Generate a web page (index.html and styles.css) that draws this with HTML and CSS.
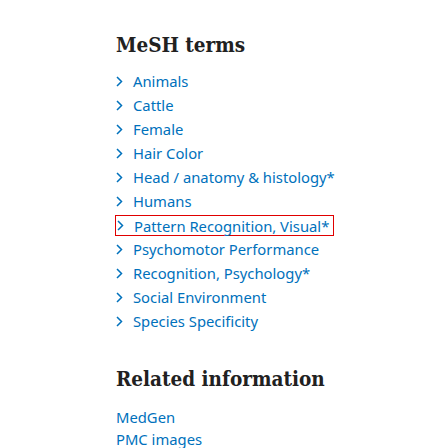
FILE: index.html
```html
<!DOCTYPE html>
<html>
<head>
<meta charset="utf-8">
<link rel="stylesheet" href="styles.css">
</head>
<body>
<div class="page">
  <section class="mesh">
    <h2 class="title">MeSH terms</h2>
    <ul class="terms">
      <li class="term"><svg class="chev" viewBox="0 0 7 11"><path d="M1 1 L5.5 5.5 L1 10"/></svg><a>Animals</a></li>
      <li class="term"><svg class="chev" viewBox="0 0 7 11"><path d="M1 1 L5.5 5.5 L1 10"/></svg><a>Cattle</a></li>
      <li class="term"><svg class="chev" viewBox="0 0 7 11"><path d="M1 1 L5.5 5.5 L1 10"/></svg><a>Female</a></li>
      <li class="term"><svg class="chev" viewBox="0 0 7 11"><path d="M1 1 L5.5 5.5 L1 10"/></svg><a>Hair Color</a></li>
      <li class="term"><svg class="chev" viewBox="0 0 7 11"><path d="M1 1 L5.5 5.5 L1 10"/></svg><a>Head / anatomy &amp; histology*</a></li>
      <li class="term"><svg class="chev" viewBox="0 0 7 11"><path d="M1 1 L5.5 5.5 L1 10"/></svg><a>Humans</a></li>
      <li class="term active"><svg class="chev" viewBox="0 0 7 11"><path d="M1 1 L5.5 5.5 L1 10"/></svg><a>Pattern Recognition, Visual*</a></li>
      <li class="term"><svg class="chev" viewBox="0 0 7 11"><path d="M1 1 L5.5 5.5 L1 10"/></svg><a>Psychomotor Performance</a></li>
      <li class="term"><svg class="chev" viewBox="0 0 7 11"><path d="M1 1 L5.5 5.5 L1 10"/></svg><a>Recognition, Psychology*</a></li>
      <li class="term"><svg class="chev" viewBox="0 0 7 11"><path d="M1 1 L5.5 5.5 L1 10"/></svg><a>Social Environment</a></li>
      <li class="term"><svg class="chev" viewBox="0 0 7 11"><path d="M1 1 L5.5 5.5 L1 10"/></svg><a>Species Specificity</a></li>
    </ul>
  </section>
  <section class="related">
    <h2 class="title">Related information</h2>
    <ul class="links">
      <li><a>MedGen</a></li>
      <li><a>PMC images</a></li>
    </ul>
  </section>
</div>
</body>
</html>
```
FILE: styles.css
```css
html, body {
  margin: 0;
  padding: 0;
  background: #fff;
}
.page {
  padding: 31px 0 0 116px;
  font-family: "Noto Sans", "Open Sans", sans-serif;
  font-weight: 400;
  font-size: 14.8px;
  color: #0071bc;
}
.title {
  margin: 0;
  font-family: "DejaVu Serif Condensed", "DejaVu Serif", serif;
  font-weight: bold;
  font-size: 20.5px;
  color: #212121;
  line-height: 28px;
}
.terms {
  list-style: none;
  margin: 10px 0 0 0;
  padding: 0;
}
.term {
  display: flex;
  align-items: center;
  height: 24px;
  line-height: 24px;
}
.chev {
  width: 7px;
  height: 11px;
  margin: 0 10px 0 0;
  fill: none;
  stroke: #0071bc;
  stroke-width: 1.5;
}
.term a {
  color: #0071bc;
}
.term.active {
  width: 216px;
  height: 19px;
  border: 1px solid #e00000;
  margin: 2px 0 1px -1px;
  padding-left: 1px;
}
.related {
  margin-top: 32px;
}
.links {
  list-style: none;
  margin: 13px 0 0 0;
  padding: 0;
}
.links li {
  line-height: 22px;
}
```
